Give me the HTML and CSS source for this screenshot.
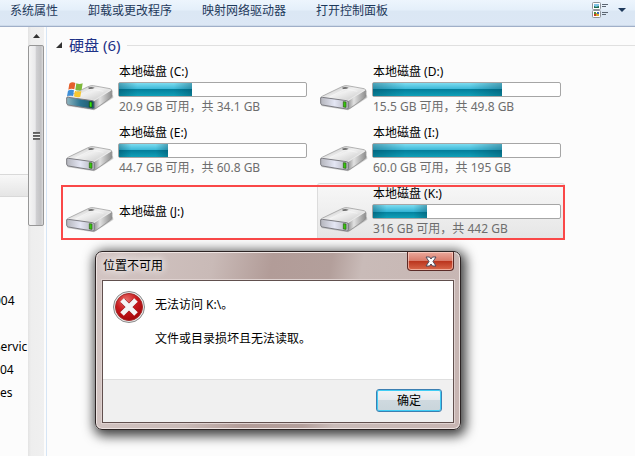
FILE: index.html
```html
<!DOCTYPE html>
<html lang="zh-CN">
<head>
  <meta charset="UTF-8" />
  <meta name="viewport" content="width=device-width, initial-scale=1.0" />
  <title>计算机</title>
  <link rel="stylesheet" href="styles.css">
</head>
<body>
  <!-- shared drawings -->
  <svg class="defs" width="0" height="0" aria-hidden="true">
    <defs>
      <linearGradient id="top" x1="0" y1="0" x2="1" y2="1">
        <stop offset="0" stop-color="#b5b5b5" />
        <stop offset="0.45" stop-color="#f0f0f0" />
        <stop offset="1" stop-color="#bdbdbd" />
      </linearGradient>
      <linearGradient id="front" x1="0" y1="0" x2="1" y2="0">
        <stop offset="0" stop-color="#b4b5bc" />
        <stop offset="0.5" stop-color="#e4e6f4" />
        <stop offset="1" stop-color="#b0b1ba" />
      </linearGradient>
      <linearGradient id="frontBlue" x1="0" y1="0" x2="1" y2="0">
        <stop offset="0" stop-color="#8fb5c0" />
        <stop offset="0.5" stop-color="#2c7490" />
        <stop offset="1" stop-color="#235868" />
      </linearGradient>
      <linearGradient id="side" x1="0" y1="0" x2="1" y2="0">
        <stop offset="0" stop-color="#8a8a8a" />
        <stop offset="0.35" stop-color="#e2e2e2" />
        <stop offset="1" stop-color="#8c8c8c" />
      </linearGradient>
      <radialGradient id="red" cx="0.4" cy="0.25" r="0.8">
        <stop offset="0" stop-color="#e8706c" />
        <stop offset="0.5" stop-color="#c8191c" />
        <stop offset="1" stop-color="#a00508" />
      </radialGradient>
      <g id="drive-body">
        <path d="M3 63 L84 76 L142 38 L141 31 L10 52Z" fill="#999" opacity="0.5" />
        <path d="M2 40 Q2 36 8 33 L66 5 Q74 1 82 2 L132 11 Q139 13 137 19 L88 52 Z" fill="url(#top)" stroke="#8f8f8f" stroke-width="2" />
        <path d="M84 49 L137 16 L138 32 Q138 36 134 39 L90 70 Q86 73 82 72Z" fill="url(#side)" />
        <path d="M138 17 L138 32 Q138 36 134 39 L90 70 Q86 73 82 72" fill="none" stroke="#858585" stroke-width="2" />
        <path d="M6 36 L80 46 Q84 47 88 44 L134 15" fill="none" stroke="#f2f2f2" stroke-width="2" />
        <path d="M28 36 L72 14 Q76 12 82 13 L112 19" fill="none" stroke="#fff" stroke-width="2" opacity="0.6" />
        <path d="M66 8 Q75 4 86 8 Q80 13 69 12Z" fill="#6e6e6e" />
      </g>
      <symbol id="drive" viewBox="0 0 144 144">
        <g transform="translate(0 57)">
          <use href="#drive-body" />
          <path d="M2 39 Q2 36 7 37 L80 47 Q85 48 85 52 L85 68 Q85 73 80 72 L7 60 Q2 59 2 54Z" fill="url(#front)" stroke="#7c7c82" stroke-width="3" />
          <path d="M70 50 L78 51 L78 67 L70 66Z" fill="#35c70d" stroke="#2b5a12" stroke-width="2" />
        </g>
      </symbol>
      <symbol id="drive-windows" viewBox="0 0 144 144">
        <g transform="translate(0 57)">
          <use href="#drive-body" />
          <path d="M2 39 Q2 36 7 37 L80 47 Q85 48 85 52 L85 68 Q85 73 80 72 L7 60 Q2 59 2 54Z" fill="url(#frontBlue)" stroke="#7c7c82" stroke-width="3" />
          <path d="M70 50 L78 51 L78 67 L70 66Z" fill="#35e70d" stroke="#163a0e" stroke-width="2" />
          <path d="M10 -4 Q18 -11 28 -6 L25 13 Q16 9 7 14Z" fill="#e4602c" />
          <path d="M31 -5 Q40 -1 50 -5 L47 14 Q37 19 28 14Z" fill="#7db83a" />
          <path d="M6 17 Q15 12 24 16 L21 33 Q12 29 3 34Z" fill="#3d8fd8" />
          <path d="M27 17 Q37 22 46 18 L43 35 Q34 39 24 34Z" fill="#f8c72e" />
        </g>
      </symbol>
    </defs>
  </svg>

  <div class="window">
    <nav class="toolbar">
      <button class="tool">系统属性</button>
      <button class="tool">卸载或更改程序</button>
      <button class="tool">映射网络驱动器</button>
      <button class="tool">打开控制面板</button>
      <button class="view" aria-label="更改视图">
        <svg width="34" height="18" viewBox="0 0 34 18">
          <rect x="0.5" y="0.5" width="8" height="7" rx="1" fill="#fff" stroke="#8e9298" />
          <rect x="2" y="2" width="5" height="4" fill="#7ec3e6" />
          <path d="M2 6V4l2 1 3-1v2z" fill="#1c6b4c" />
          <rect x="0.5" y="8.5" width="8" height="7" rx="1" fill="#fff" stroke="#8e9298" />
          <rect x="2" y="10" width="2" height="2" fill="#4a8e3a" />
          <rect x="4" y="11" width="3" height="3" fill="#d8a928" />
          <rect x="2" y="12" width="2" height="2" fill="#c6362c" />
          <rect x="5" y="10" width="2" height="2" fill="#3c67b8" />
          <path d="M10 2.500h6M10 4.500h4M10 10.500h6M10 12.500h4" stroke="#5c6672" />
          <path d="M26 6h8l-4 4z" fill="#1e395b" />
        </svg>
      </button>
    </nav>

    <div class="panes">
      <aside class="sidebar">
        <ul class="tree">
          <li class="selected"></li>
          <li></li>
          <li></li>
          <li></li>
          <li></li>
          <li class="scrolled">004</li>
          <li></li>
          <li class="scrolled">Servic</li>
          <li>04</li>
          <li>es</li>
        </ul>
        <div class="scrollbar">
          <svg class="scroll-up" width="7" height="4" viewBox="0 0 7 4"><path d="M0 4h7L3.500 0z" fill="#333" /></svg>
          <div class="thumb"><span class="grip"></span></div>
        </div>
      </aside>

      <main class="content">
        <h2 class="group">
          <svg width="6" height="6" viewBox="0 0 6 6"><path d="M6 0v6H0z" fill="#333" /></svg>
          硬盘 (6)
        </h2>
        <div class="drives">
          <div class="drive">
            <svg class="drive-icon"><use href="#drive-windows" /></svg>
            <div class="info">
              <div class="name">本地磁盘 (C:)</div>
              <div class="bar"><div class="used" style="width: 39%"></div></div>
              <div class="free">20.9 GB 可用，共 34.1 GB</div>
            </div>
          </div>
          <div class="drive">
            <svg class="drive-icon"><use href="#drive" /></svg>
            <div class="info">
              <div class="name">本地磁盘 (D:)</div>
              <div class="bar"><div class="used" style="width: 69%"></div></div>
              <div class="free">15.5 GB 可用，共 49.8 GB</div>
            </div>
          </div>
          <div class="drive">
            <svg class="drive-icon"><use href="#drive" /></svg>
            <div class="info">
              <div class="name">本地磁盘 (E:)</div>
              <div class="bar"><div class="used" style="width: 26%"></div></div>
              <div class="free">44.7 GB 可用，共 60.8 GB</div>
            </div>
          </div>
          <div class="drive">
            <svg class="drive-icon"><use href="#drive" /></svg>
            <div class="info">
              <div class="name">本地磁盘 (I:)</div>
              <div class="bar"><div class="used" style="width: 69%"></div></div>
              <div class="free">60.0 GB 可用，共 195 GB</div>
            </div>
          </div>
          <div class="drive">
            <svg class="drive-icon"><use href="#drive" /></svg>
            <div class="info">
              <div class="name">本地磁盘 (J:)</div>
            </div>
          </div>
          <div class="drive active">
            <svg class="drive-icon"><use href="#drive" /></svg>
            <div class="info">
              <div class="name">本地磁盘 (K:)</div>
              <div class="bar"><div class="used" style="width: 29%"></div></div>
              <div class="free">316 GB 可用，共 442 GB</div>
            </div>
          </div>
          <div class="mark"></div>
        </div>
      </main>
    </div>
  </div>

  <div class="dialog" role="alertdialog" aria-labelledby="dialog-title">
    <div class="titlebar">
      <span class="title" id="dialog-title">位置不可用</span>
      <button class="close" aria-label="关闭">
        <svg width="12" height="11" viewBox="0 0 12 11">
          <path d="M1 1h3.500L6 3l1.500-2H11L8 5.500l3 4.500H7.500L6 8l-1.500 2H1l3-4.500z" fill="#fff" stroke="#4c4a5c" />
        </svg>
      </button>
    </div>
    <div class="client">
      <div class="message">
        <svg class="error" width="32" height="32" viewBox="0 0 32 32">
          <circle cx="16" cy="16" r="15.500" fill="#e9e9e9" stroke="#8b8b8b" />
          <circle cx="16" cy="16" r="13.500" fill="url(#red)" stroke="#a52a2a" />
          <path d="M10 10l12 12M22 10L10 22" stroke="#8d0d10" stroke-width="6" />
          <path d="M9 9l14 14M23 9L9 23" stroke="#f5f5f5" stroke-width="5" />
        </svg>
        <div class="text">
          <p>无法访问 K:\。</p>
          <p>文件或目录损坏且无法读取。</p>
        </div>
      </div>
      <div class="actions">
        <button class="ok">确定</button>
      </div>
    </div>
  </div>
</body>
</html>
```
FILE: styles.css
```css
* {
  box-sizing: border-box;
}
body {
  margin: 0;
  font-family: "Noto Sans", "Noto Sans CJK SC", sans-serif;
  font-size: 12px;
  line-height: 18px;
  color: #000;
  background: #fcfcfc;
}
button {
  font: inherit;
  padding: 0;
  border: none;
  background: none;
}
svg {
  display: block;
  flex: none;
}
.defs {
  position: absolute;
}
.window {
  display: flex;
  flex-direction: column;
  min-height: 100vh;
}

/* toolbar */
.toolbar {
  display: flex;
  align-items: flex-start;
  gap: 30px;
  height: 27px;
  padding: 2px 9px 0 10px;
  background: linear-gradient(#edf5fd 0, #e4effa 10px, #dbe7f4 11px, #dce7f5 100%);
  border-bottom: 1px solid #a0afc8;
  box-shadow: inset 0 -1px #cddaea;
}
.tool {
  color: #1e395b;
  white-space: nowrap;
}
.view {
  margin-left: auto;
}

/* panes */
.panes {
  display: flex;
  flex: 1;
}
.sidebar {
  display: flex;
  width: 47px;
  padding-right: 2px;
  border-right: 1px solid #d6e5f5;
}
.tree {
  flex: 1;
  min-width: 0;
  margin: 0;
  padding: 147px 0 0;
  list-style: none;
  overflow: hidden;
}
.tree li {
  height: 23px;
  line-height: 23px;
  white-space: nowrap;
}
.tree .scrolled {
  text-indent: -6px;
}
.tree .selected {
  background: linear-gradient(#f8f8f8, #e5e5e5);
  border: solid #d9d9d9;
  border-width: 1px 0;
}
.scrollbar {
  width: 16px;
  background: linear-gradient(90deg, #e3e3e3, #eee 3px, #f0f0f0);
}
.scroll-up {
  margin: 7px auto;
}
.thumb {
  display: flex;
  align-items: center;
  justify-content: center;
  height: 181px;
  border: 1px solid #979797;
  border-radius: 2px;
  background: linear-gradient(90deg, #f5f5f5, #e9e9eb 45%, #d0d0d3 50%, #c2c2c4 85%, #dcdcdc);
}
.grip {
  width: 7px;
  height: 8px;
  background: repeating-linear-gradient(#555 0, #777 2px, #f0f0f0 2px, #f0f0f0 3px);
}
.content {
  flex: 1;
  min-width: 0;
  padding: 7px 0 0 9px;
}
.group {
  display: flex;
  align-items: center;
  gap: 7px;
  margin: 0 0 5px;
  font-size: 15px;
  font-weight: normal;
  line-height: 22px;
  color: #1e3287;
}
.group::after {
  content: "";
  flex: 1;
  height: 1px;
  background: #e0e0e0;
}

/* drives */
.drives {
  position: relative;
  display: grid;
  grid-template-columns: repeat(auto-fill, 248px);
  gap: 4px 6px;
  width: 100%;
  padding-left: 7px;
}
.drive {
  display: flex;
  align-items: center;
  gap: 4px;
  height: 57px;
  padding: 0 3px;
}
.drive.active {
  background: linear-gradient(#f8f8f8, #e5e5e5);
  border-radius: 3px;
  box-shadow: inset 0 0 0 1px #dcdcdc;
}
.drive-icon {
  width: 48px;
  height: 48px;
}
.info {
  flex: 0 0 189px;
}
.name,
.free {
  padding-left: 1px;
  white-space: nowrap;
}
.free {
  line-height: 20px;
  color: #6d6d6d;
}
.bar {
  height: 15px;
  margin-top: 1px;
  border: 1px solid #a6a6a6;
  border-radius: 2px;
  background: #fff;
}
.used {
  height: 100%;
  background:
    linear-gradient(90deg, rgba(0, 60, 80, 0.35), transparent 25%, transparent 75%, rgba(0, 60, 80, 0.35)),
    linear-gradient(#7ddcf0, #35b5d5 50%, #037f9c 50%, #0fa0b8);
}
.mark {
  position: absolute;
  left: 5px;
  bottom: 0;
  width: 504px;
  height: 55px;
  border: 2px solid #fa4848;
}

/* dialog */
.dialog {
  position: absolute;
  top: 251px;
  left: 95px;
  width: 366px;
  padding: 0 6px 6px;
  border: 1px solid #2c2424;
  border-radius: 7px;
  background: linear-gradient(100deg, #d3c5c3, #c9bab7 30%, #b29c98 45%, #b39f9b 60%, #c9bbb8 68%, #c7b5b2);
  box-shadow: inset 0 0 0 1px #eee4e2, 2px 3px 12px 3px rgba(0, 0, 0, 0.75);
}
.titlebar {
  display: flex;
  align-items: flex-start;
  justify-content: space-between;
  height: 28px;
}
.title {
  padding: 5px 1px 0;
  text-shadow: 0 0 8px #fff, 0 0 8px #fff;
}
.close {
  display: flex;
  align-items: center;
  justify-content: center;
  width: 47px;
  height: 19px;
  border: 1px solid #5b2a26;
  border-top: none;
  border-radius: 0 0 4px 4px;
  background: linear-gradient(#eba99c, #d87a69 50%, #b9331c 50%, #d9684b);
  box-shadow: inset 0 0 0 1px rgba(255, 220, 210, 0.6);
}
.client {
  border: 1px solid #61504e;
  background: #fff;
  box-shadow: 0 0 0 1px #dfd2d0;
}
.message {
  display: flex;
  gap: 10px;
  min-height: 98px;
  padding: 10px;
}
.text p {
  margin: 5px 0 16px;
}
.actions {
  display: flex;
  justify-content: flex-end;
  padding: 9px 11px 10px;
  border-top: 1px solid #dfdfdf;
  background: #f0f0f0;
}
.ok {
  width: 66px;
  height: 23px;
  border: 1px solid #3c7fb1;
  border-radius: 3px;
  background: linear-gradient(#f0f3f5, #e3e9ed 50%, #cfd9df 50%, #c9d5db);
  box-shadow: inset 0 0 0 1px #3fcdf5;
}
```
